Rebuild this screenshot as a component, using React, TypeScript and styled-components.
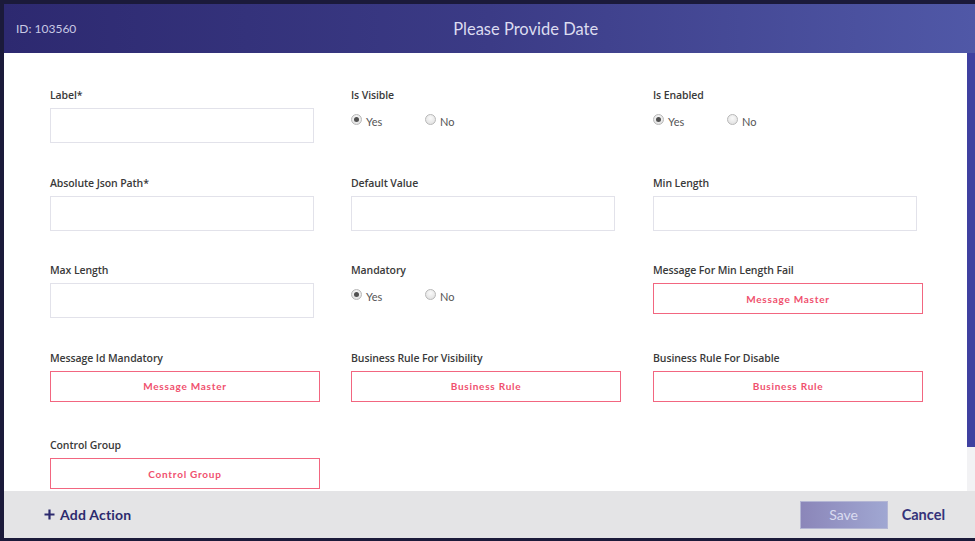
import React from "react";
import styled, { createGlobalStyle } from "styled-components";

const Global = createGlobalStyle`
  html, body { margin: 0; padding: 0; }
  body {
    background: #1b1a3a;
    font-family: "Lato", "Open Sans", sans-serif;
    width: 975px;
    height: 541px;
    overflow: hidden;
  }
`;

const Stage = styled.div`
  width: 975px;
  height: 541px;
  padding: 4px 0 3px 4px;
  box-sizing: border-box;
  display: flex;
`;

const Modal = styled.div`
  flex: 1;
  display: flex;
  flex-direction: column;
  background: #fff;
  overflow: hidden;
`;

const Header = styled.div`
  height: 49px;
  flex: none;
  display: flex;
  align-items: center;
  padding-left: 12px;
  background: linear-gradient(90deg, #2d2970 0%, #3b3b86 50%, #5058a7 100%);
  box-sizing: border-box;
`;

const HeaderId = styled.div`
  font-size: 12px;
  color: #c9c9e4;
`;

const HeaderTitle = styled.div`
  flex: 1;
  text-align: center;
  font-size: 16.5px;
  color: #dcdcf0;
`;

const Middle = styled.div`
  flex: 1;
  display: flex;
  min-height: 0;
`;

const Body = styled.div`
  flex: 1;
  overflow: hidden;
  padding: 35px 0 0 46px;
  box-sizing: border-box;
`;

const Scrollbar = styled.div`
  width: 8px;
  flex: none;
  background: #f2f2f4;
  display: flex;
  flex-direction: column;
`;

const Thumb = styled.div`
  height: 394px;
  background: #3f40a0;
`;

const Grid = styled.div`
  display: grid;
  grid-template-columns: 270px 271px 270px;
  column-gap: 31px;
  grid-auto-rows: 87.5px;
`;

const Field = styled.div`
  display: flex;
  flex-direction: column;
`;

const Label = styled.div`
  font-family: "Open Sans", "Lato", sans-serif;
  font-size: 10.5px;
  line-height: 14px;
  font-weight: 600;
  color: #3a3a3a;
  margin-bottom: 6px;
  letter-spacing: -0.1px;
`;

const Input = styled.div`
  width: 264px;
  height: 35px;
  box-sizing: border-box;
  border: 1px solid #e2e2ea;
  background: #fff;
`;

const PinkButton = styled.div`
  width: 270px;
  height: 31px;
  box-sizing: border-box;
  border: 1.5px solid #f26680;
  display: flex;
  align-items: center;
  justify-content: center;
  color: #f0506e;
  font-size: 10px;
  font-weight: 700;
  letter-spacing: 0.75px;
`;

const RadioRow = styled.div`
  display: flex;
  align-items: center;
  padding-top: 5px;
`;

const RadioOption = styled.div<{ $w: number }>`
  display: flex;
  align-items: center;
  width: ${(p) => p.$w}px;
  gap: 4px;
  font-size: 11px;
  color: #555;
`;

const RadioCircle = styled.span<{ $on?: boolean }>`
  width: 11px;
  height: 11px;
  box-sizing: border-box;
  border-radius: 50%;
  border: 1px solid #b8b8b8;
  background: radial-gradient(circle at 50% 35%, #fafafa, #dcdcdc);
  display: flex;
  align-items: center;
  justify-content: center;
  &::after {
    content: "";
    width: 5px;
    height: 5px;
    border-radius: 50%;
    background: ${(p) => (p.$on ? "#505050" : "transparent")};
  }
`;

const RadioText = styled.span`
  position: relative;
  top: 2px;
`;

const Footer = styled.div`
  height: 47px;
  flex: none;
  background: #e4e4e6;
  display: flex;
  align-items: center;
  padding: 0 30px 0 40px;
  box-sizing: border-box;
`;

const AddAction = styled.div`
  display: flex;
  align-items: center;
  gap: 5px;
  color: #2c2a6e;
  font-size: 14px;
  font-weight: 700;
  letter-spacing: 0.2px;
  flex: 1;
`;

const SaveButton = styled.div`
  width: 88px;
  height: 28px;
  background: linear-gradient(90deg, #8b86b9 0%, #a0a7d2 100%);
  border: 1px solid #b4b6d4;
  box-sizing: border-box;
  color: #dadcf0;
  font-size: 14px;
  display: flex;
  align-items: center;
  justify-content: center;
  margin-right: 14px;
`;

const Cancel = styled.div`
  color: #35327a;
  font-size: 14.5px;
  font-weight: 700;
`;

type Item =
  | { kind: "input"; label: string }
  | { kind: "radio"; label: string }
  | { kind: "button"; label: string; text: string };

const items: Item[] = [
  { kind: "input", label: "Label*" },
  { kind: "radio", label: "Is Visible" },
  { kind: "radio", label: "Is Enabled" },
  { kind: "input", label: "Absolute Json Path*" },
  { kind: "input", label: "Default Value" },
  { kind: "input", label: "Min Length" },
  { kind: "input", label: "Max Length" },
  { kind: "radio", label: "Mandatory" },
  { kind: "button", label: "Message For Min Length Fail", text: "Message Master" },
  { kind: "button", label: "Message Id Mandatory", text: "Message Master" },
  { kind: "button", label: "Business Rule For Visibility", text: "Business Rule" },
  { kind: "button", label: "Business Rule For Disable", text: "Business Rule" },
  { kind: "button", label: "Control Group", text: "Control Group" },
];

const Plus = () => (
  <svg width="11" height="11" viewBox="0 0 11 11">
    <path d="M5.5 0.5v10M0.5 5.5h10" stroke="#2c2a6e" strokeWidth="2.2" />
  </svg>
);

export default function App() {
  return (
    <>
      <Global />
      <Stage>
        <Modal>
          <Header>
            <HeaderId>ID: 103560</HeaderId>
            <HeaderTitle>Please Provide Date</HeaderTitle>
          </Header>
          <Middle>
            <Body>
              <Grid>
                {items.map((it, i) => (
                  <Field key={i}>
                    <Label>{it.label}</Label>
                    {it.kind === "input" && <Input />}
                    {it.kind === "button" && <PinkButton>{it.text}</PinkButton>}
                    {it.kind === "radio" && (
                      <RadioRow>
                        <RadioOption $w={74}>
                          <RadioCircle $on />
                          <RadioText>Yes</RadioText>
                        </RadioOption>
                        <RadioOption $w={60}>
                          <RadioCircle />
                          <RadioText>No</RadioText>
                        </RadioOption>
                      </RadioRow>
                    )}
                  </Field>
                ))}
              </Grid>
            </Body>
            <Scrollbar>
              <Thumb />
            </Scrollbar>
          </Middle>
          <Footer>
            <AddAction>
              <Plus />
              <span>Add Action</span>
            </AddAction>
            <SaveButton>Save</SaveButton>
            <Cancel>Cancel</Cancel>
          </Footer>
        </Modal>
      </Stage>
    </>
  );
}
